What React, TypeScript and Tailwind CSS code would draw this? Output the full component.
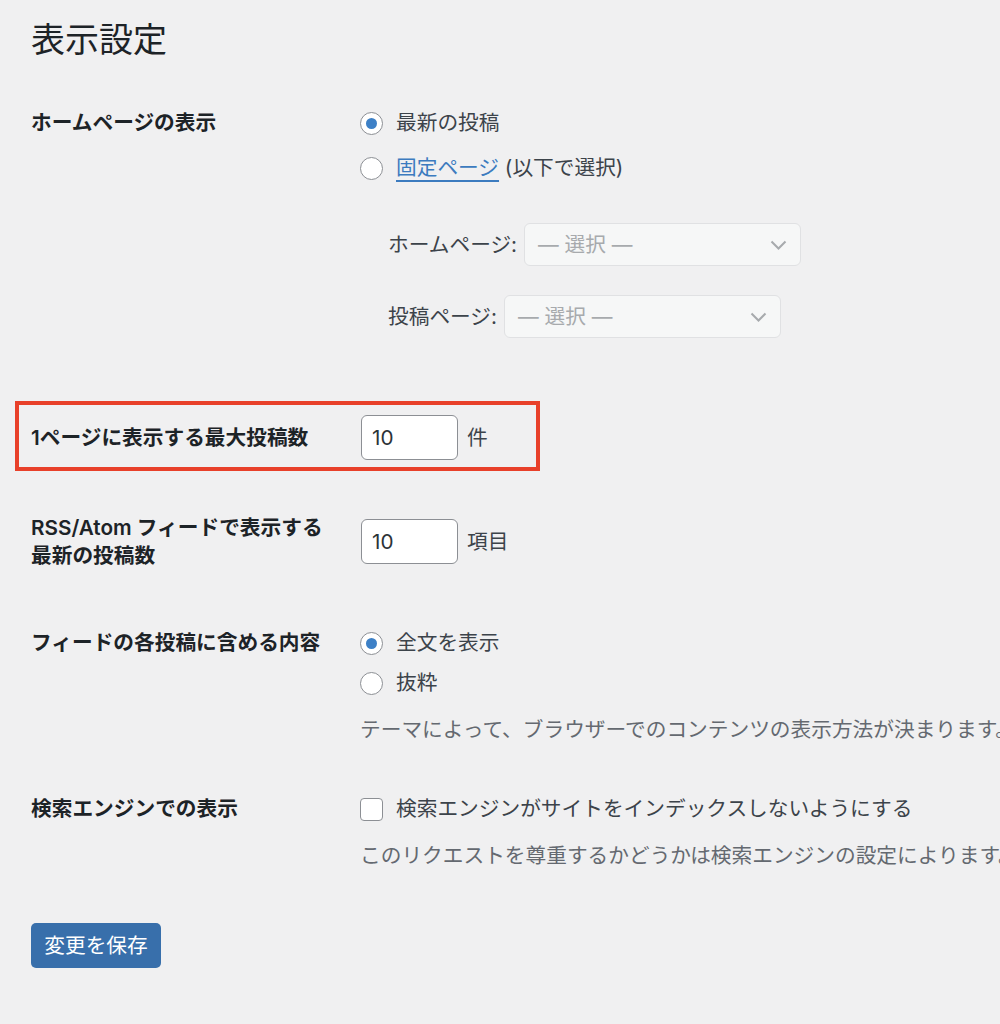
import type { ReactNode } from "react"

const Radio = ({ checked, children }: { checked?: boolean; children: ReactNode }) => (
    <label className="flex items-center gap-[13px]">
        <span className="flex h-[23px] w-[23px] shrink-0 items-center justify-center rounded-full border border-[#8c8f94] bg-white">
            {checked && <span className="h-[11px] w-[11px] rounded-full bg-[#3d80c6]" />}
        </span>
        <span>{children}</span>
    </label>
)

const NumberInput = ({ value, unit }: { value: string; unit: string }) => (
    <div className="ml-px flex items-center gap-[9px]">
        <div className="flex h-[45px] w-[97px] items-center rounded-[6px] border border-[#8c8f94] bg-white pl-[10px] text-[#2c3338]">
            {value}
        </div>
        <span>{unit}</span>
    </div>
)

const SelectBox = ({ label, width }: { label: string; width: string }) => (
    <div className="flex items-center gap-[7px]">
        <span>{label}</span>
        <div className={`flex h-[43px] ${width} items-center justify-between rounded-[6px] border border-[#e0e1e3] bg-[#f6f7f7] pl-[13px] pr-[13px] text-[#a7aaad]`}>
            <span>— 選択 —</span>
            <svg width="17" height="10" viewBox="0 0 17 10" fill="none">
                <path d="M1.5 1.5l7 7 7-7" stroke="#a7aaad" strokeWidth="2" />
            </svg>
        </div>
    </div>
)

export default function App() {
    return (
        <div className="min-h-screen w-full overflow-hidden bg-[#f0f0f1] pl-[31px] pt-[17px] font-[Inter,'Noto_Sans_CJK_JP',sans-serif] text-[20.7px] leading-[28px] text-[#3c434a]">
            <h1 className="text-[34px] font-normal leading-[46px] text-[#1d2327]">表示設定</h1>

            {/* Homepage display */}
            <div className="mt-[46px] flex items-start">
                <div className="w-[329px] shrink-0 font-semibold text-[#1d2327]">ホームページの表示</div>
                <div>
                    <Radio checked>最新の投稿</Radio>
                    <div className="mt-[17px]">
                        <Radio>
                            <a className="text-[#3c7bbf] underline underline-offset-[5px]">固定ページ</a> (以下で選択)
                        </Radio>
                    </div>
                    <div className="ml-[28px] mt-[41px]">
                        <SelectBox label="ホームページ:" width="w-[277px]" />
                    </div>
                    <div className="ml-[28px] mt-[29px]">
                        <SelectBox label="投稿ページ:" width="w-[277px]" />
                    </div>
                </div>
            </div>

            {/* Posts per page (highlighted) */}
            <div className="-ml-[16px] mt-[63px] flex w-[525px] items-center border-4 border-[#e8402a] pb-[7px] pl-[12px] pt-[10px]">
                <div className="w-[329px] shrink-0 font-semibold text-[#1d2327]">1ページに表示する最大投稿数</div>
                <NumberInput value="10" unit="件" />
            </div>

            {/* RSS feed count */}
            <div className="mt-[43px] flex items-start">
                <div className="w-[329px] shrink-0 font-semibold text-[#1d2327]">
                    RSS/Atom フィードで表示する
                    <br />
                    最新の投稿数
                </div>
                <div className="mt-[5px]">
                    <NumberInput value="10" unit="項目" />
                </div>
            </div>

            {/* Feed content */}
            <div className="mt-[59px] flex items-start">
                <div className="w-[329px] shrink-0 font-semibold text-[#1d2327]">フィードの各投稿に含める内容</div>
                <div>
                    <Radio checked>全文を表示</Radio>
                    <div className="mt-[12px]">
                        <Radio>抜粋</Radio>
                    </div>
                    <p className="mt-[19px] whitespace-nowrap text-[#646970]">
                        テーマによって、ブラウザーでのコンテンツの表示方法が決まります。
                    </p>
                </div>
            </div>

            {/* Search engine visibility */}
            <div className="mt-[51px] flex items-start">
                <div className="w-[329px] shrink-0 font-semibold text-[#1d2327]">検索エンジンでの表示</div>
                <div>
                    <label className="flex items-center gap-[13px]">
                        <span className="h-[23px] w-[23px] shrink-0 rounded-[4px] border border-[#8c8f94] bg-white" />
                        <span>検索エンジンがサイトをインデックスしないようにする</span>
                    </label>
                    <p className="mt-[19px] whitespace-nowrap text-[#646970]">
                        このリクエストを尊重するかどうかは検索エンジンの設定によります。
                    </p>
                </div>
            </div>

            <button className="mt-[53px] h-[45px] w-[130px] rounded-[5px] bg-[#386fab] text-white">変更を保存</button>
        </div>
    )
}
